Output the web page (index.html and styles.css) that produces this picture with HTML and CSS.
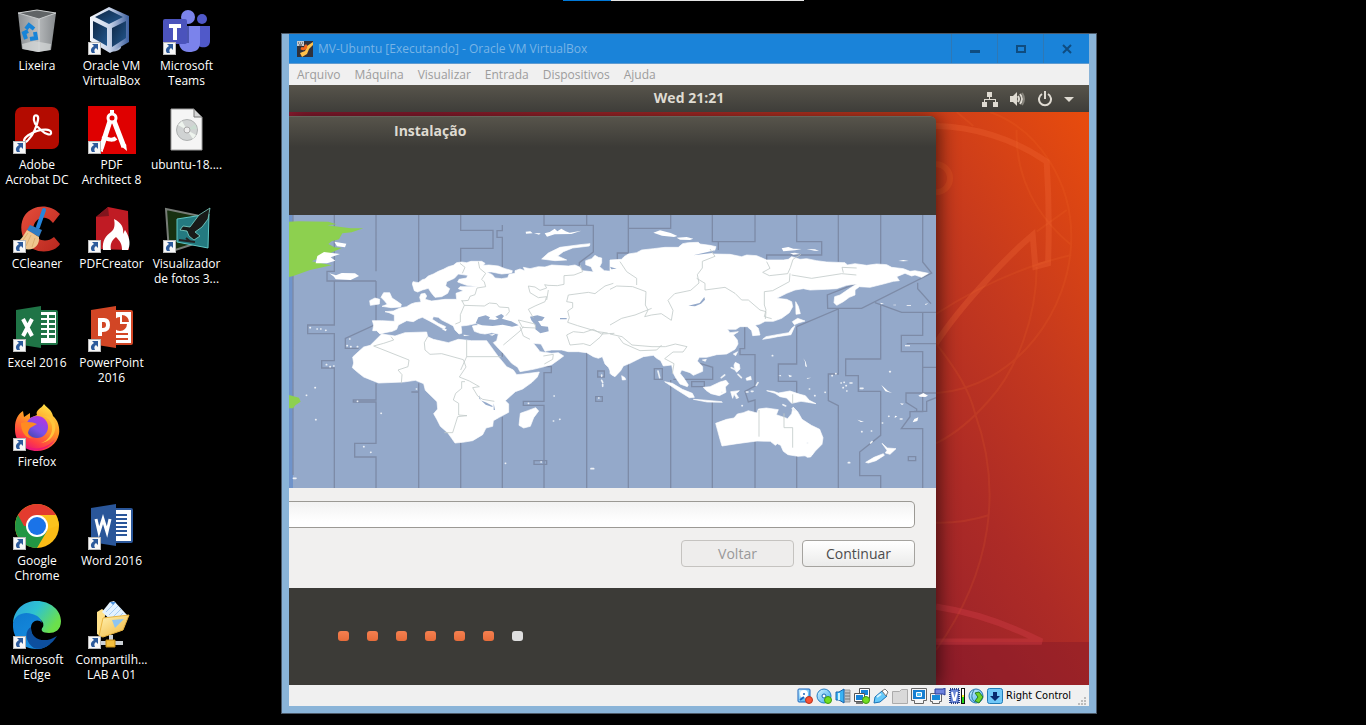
FILE: index.html
```html
<!DOCTYPE html>
<html lang="pt-BR">
<head>
<meta charset="utf-8">
<title>MV-Ubuntu [Executando] - Oracle VM VirtualBox</title>
<link rel="stylesheet" href="styles.css">
</head>
<body>
<svg class="defs" aria-hidden="true">
  <defs>
    <symbol id="shortcut" viewBox="0 0 13 13">
      <path d="M0 0h13v13H0z" fill="#b9b9b9"/><path d="M1 1h11v11H1z" fill="#f7f7f7"/>
      <path d="M4 2h6v6L8 6C6 7 6 9 7 11H4C2 8 3 6 6 4z" fill="#2c5a9b"/>
    </symbol>
    <linearGradient id="steel" x2="1"><stop stop-color="#8b8f92"/><stop offset=".5" stop-color="#b9bcbe"/><stop offset="1" stop-color="#85898c"/></linearGradient>
    <linearGradient id="vbFace" x2="1" y2="1"><stop stop-color="#0e2745"/><stop offset="1" stop-color="#23588f"/></linearGradient>
    <linearGradient id="vbEdge" x2="1"><stop stop-color="#f4f7fc"/><stop offset=".5" stop-color="#cbd6ea"/><stop offset="1" stop-color="#3c5f9e"/></linearGradient>
    <linearGradient id="foxBody" x1=".8" x2=".3" y2="1"><stop stop-color="#ffe94a"/><stop offset=".45" stop-color="#ff9526"/><stop offset=".8" stop-color="#ff3d45"/><stop offset="1" stop-color="#e5127b"/></linearGradient>
    <linearGradient id="foxGlobe" x1=".8" x2=".2" y2="1"><stop stop-color="#b833e1"/><stop offset=".6" stop-color="#7a50e8"/><stop offset="1" stop-color="#4247b0"/></linearGradient>
    <linearGradient id="edgeTop" x2="1" y2=".5"><stop stop-color="#2b9fe0"/><stop offset=".5" stop-color="#2fc3d0"/><stop offset="1" stop-color="#6be04b"/></linearGradient>
    <linearGradient id="edgeSide" x2=".6" y2="1"><stop stop-color="#0e7ad0"/><stop offset="1" stop-color="#1890e0"/></linearGradient>
    <linearGradient id="folder" x2=".8" y2="1"><stop stop-color="#fff3b5"/><stop offset="1" stop-color="#f2bb45"/></linearGradient>
    <linearGradient id="swoosh" x2="1" y2="1"><stop stop-color="#e54d3b"/><stop offset="1" stop-color="#b8271e"/></linearGradient>
    <linearGradient id="ice" x2="1" y2="1"><stop stop-color="#d6f3ff"/><stop offset="1" stop-color="#35a8ef"/></linearGradient>
  </defs>
</svg>
<main class="desktop">
  <div class="peek" aria-hidden="true"><span class="peek-active"></span><span class="peek-rest"></span></div>

  <nav class="icons" aria-label="Área de trabalho">
    <a class="icon" href="#"><svg viewBox="0 0 48 48">
      <path d="M5 6 24 3l19 3-5 37-13 2-16-3z" fill="url(#steel)"/><path d="M5 6 24 3l19 3-17 6z" fill="#606466" stroke="#c9cccd"/>
      <path d="M26 12v33" stroke="#d3d5d6"/><path d="m9 37 12-3 17 3-1 6-12 2-15-3z" fill="#d6d8d9" opacity=".7"/>
      <g fill="none" stroke="#1784d8" stroke-width="4"><path d="m13 22 3-4 5 4"/><path d="m22 25 1 6-6 1"/><path d="m13 32-2-6 4-2"/></g></svg><span>Lixeira</span></a>
    <a class="icon" href="#"><svg viewBox="0 0 48 48">
      <path d="M16 40c2-5 15-5 17 0 0 5-15 7-17 0z" fill="#a9b8d2"/>
      <path d="M21 0 41 9v26L22 46 2 34V10z" fill="url(#vbEdge)"/>
      <path d="m21 3 14 7-14 7-14-7z" fill="url(#vbFace)"/><path d="m5 14 14 7v18L5 31z" fill="url(#vbFace)"/><path d="m24 21 14-7v17l-14 9z" fill="url(#vbFace)"/>
      <use href="#shortcut" y="35" width="13" height="13"/></svg><span>Oracle VM<br>VirtualBox</span></a>
    <a class="icon" href="#"><svg viewBox="0 0 48 48">
      <circle cx="39" cy="12" r="5" fill="#5059c9"/><path d="M34 19h13v15c0 7-8 8-13 4z" fill="#5059c9"/>
      <circle cx="25" cy="10" r="7" fill="#7b83eb"/><path d="M16 19h21v17c0 7-5 9-11 9-8 0-10-6-10-10z" fill="#7b83eb"/>
      <path d="M15 19h11v17H15z" fill="#4b55b0"/><rect y="12" width="24" height="25" rx="2" fill="#4b53bc"/>
      <path d="M6 17h12v4h-4v12h-4V21H6z" fill="#fff"/><use href="#shortcut" y="35" width="13" height="13"/></svg><span>Microsoft<br>Teams</span></a>

    <a class="icon" href="#"><svg viewBox="0 0 48 48">
      <rect x="2" y="1" width="44" height="42" rx="7" fill="#b30b00"/>
      <path d="M11 35c0-4 7-8 13-10 6-2 13-2 14 1 1 4-5 3-10-2-5-4-8-9-7-13 1-3 5-2 4 3-1 6-5 15-9 19-2 3-5 4-5 2z" fill="none" stroke="#fff" stroke-width="2.2"/>
      <use href="#shortcut" y="35" width="13" height="13"/></svg><span>Adobe<br>Acrobat DC</span></a>
    <a class="icon" href="#"><svg viewBox="0 0 48 48">
      <path d="M0 0h48v48H0z" fill="#df0000"/><path d="M22 4h4v5h-4z" fill="#fff"/><circle cx="24" cy="12" r="4" fill="#df0000" stroke="#fff" stroke-width="3"/>
      <path d="M22 15 13 43M26 15l10 26" stroke="#fff" stroke-width="5"/><path d="m33 40 5-2 1 7zM15 41l-3 4 3 1z" fill="#fff"/><path d="M15 30c5 5 11 4 13 2" fill="none" stroke="#fff" stroke-width="4"/>
      <use href="#shortcut" y="35" width="13" height="13"/></svg><span>PDF<br>Architect 8</span></a>
    <a class="icon" href="#"><svg viewBox="0 0 48 48">
      <path d="M8 3h23l8 8v33H8z" fill="#f5f5f5" stroke="#9b9b9b"/><path d="M31 3v8h8z" fill="#d4d4d4" stroke="#777"/>
      <circle cx="24" cy="24" r="10.500" fill="#d0d3d3" stroke="#aeb1b1"/><path d="m24 24-9-5 4-4zm0 0 9 5-3 4z" fill="#eef4ee"/><path d="m24 24 8-6 2 5z" fill="#c9dbd0"/><circle cx="24" cy="24" r="3" fill="#eee" stroke="#aaa"/></svg><span>ubuntu-18....</span></a>

    <a class="icon" href="#"><svg viewBox="0 0 48 48">
      <path d="M47 9C36-2 20 0 12 10c-7 10-4 27 8 34 10 5 23 2 27-5l-6-7c-7 6-17 4-20-4-3-9 4-17 12-15 4 1 5 3 7 5z" fill="url(#swoosh)"/>
      <path d="M31 5 25 22" stroke="#2585dc" stroke-width="4" stroke-linecap="round"/><path d="m17 20 12 5-3 7-12-7z" fill="#2f7cc3"/>
      <path d="M14 25 26 32c1 8-5 14-14 12L2 38c6-2 8-7 12-13z" fill="#efc68f"/><path d="m15 28-7 10m10-8-5 11m9-8-3 9" fill="none" stroke="#dcae70"/>
      <use href="#shortcut" y="35" width="13" height="13"/></svg><span>CCleaner</span></a>
    <a class="icon" href="#"><svg viewBox="0 0 48 48">
      <path d="M8 12 20 2l20 4 1 39-33-1z" fill="#c01b24"/><path d="m8 12 12-10 1 9z" fill="#80151d"/>
      <path d="M15 45c-1-10 3-14 8-18 4-3 4-8 3-13 8 4 10 9 9 15l2-4c6 9 5 16 3 20h-6c0-6-2-9-6-13-5 4-6 8-5 13z" fill="#fff"/>
      <use href="#shortcut" y="35" width="13" height="13"/></svg><span>PDFCreator</span></a>
    <a class="icon" href="#"><svg viewBox="0 0 48 48">
      <path d="m3 4 34 7v26L6 47z" fill="#173010" stroke="#777c77" stroke-width="2"/><path d="m14 14 32-5-1 34-31-6z" fill="#247a80" stroke="#5fc7c5"/>
      <path d="M47 3 36 10l-9 12-7-1-3 4 7 1 2 5 5 4 6-4-5-4 7-5 6-8z" fill="#181a18" stroke="#8ceadb" stroke-width=".7"/><path d="m16 35 16 2m-9-4 5 4" stroke="#222" stroke-width="2"/>
      <use href="#shortcut" y="35" width="13" height="13"/></svg><span>Visualizador<br>de fotos 3...</span></a>

    <a class="icon" href="#"><svg viewBox="0 0 48 48">
      <rect x="25" y="7" width="19" height="33" rx="1" fill="#fff" stroke="#1f7446" stroke-width="2"/><path d="M28 11h6v3h-6zm8 0h6v3h-6zM28 16h6v3h-6zm8 0h6v3h-6zM28 21h6v3h-6zm8 0h6v3h-6zM28 26h6v3h-6zm8 0h6v3h-6zM28 31h6v3h-6zm8 0h6v3h-6z" fill="#1f7446"/>
      <path d="m3 6 25-4v42L3 40z" fill="#1f7446"/><path d="m10 15 9 17m0-17-9 17" stroke="#fff" stroke-width="4"/>
      <use href="#shortcut" y="35" width="13" height="13"/></svg><span>Excel 2016</span></a>
    <a class="icon" href="#"><svg viewBox="0 0 48 48">
      <rect x="25" y="7" width="19" height="33" rx="1" fill="#fff" stroke="#d24625" stroke-width="2"/><path d="M32 13v7h7a7 7 0 1 1-7-7z" fill="#d24625"/><path d="M34 11a7 7 0 0 1 7 7h-7zM28 29h12v2H28zm0 5h12v2H28z" fill="#d24625"/>
      <path d="m3 6 25-4v42L3 40z" fill="#d24625"/><path d="M12 32V16h4q4 0 4 5t-5 5h-3" fill="none" stroke="#fff" stroke-width="4"/>
      <use href="#shortcut" y="35" width="13" height="13"/></svg><span>PowerPoint<br>2016</span></a>

    <a class="icon solo" href="#"><svg viewBox="0 0 48 48">
      <path d="M31 1c3 4 8 6 9 12 5 4 7 12 6 18-2 10-11 17-22 17C11 48 1 38 2 24 2 17 5 11 10 8l1 6 6-4v5l7-3c-2-5 4-6 7-11z" fill="url(#foxBody)"/>
      <circle cx="24" cy="24" r="11" fill="url(#foxGlobe)"/><path d="M8 20c6-2 12-1 16 1l-7 4c-5 7 1 11 5 10-10 2-14-7-14-15z" fill="#ff8b21"/><path d="M28 13c5 0 10 4 11 10 1 8-4 15-11 17 14-2 18-17 11-25-3-3-5-1-11-2z" fill="#ffc43c"/>
      <path d="M7 39c10 9 26 9 35-3-5 11-26 17-35 3z" fill="#ed1778"/><use href="#shortcut" y="35" width="13" height="13"/></svg><span>Firefox</span></a>

    <a class="icon solo" href="#"><svg viewBox="0 0 48 48">
      <circle cx="24" cy="24" r="22" fill="#fbbc16"/><path d="M43 13H24L5 13a22 22 0 0 1 38 0z" fill="#e33b2e"/><path d="M5 13a22 22 0 0 0 19 33l10-17-10-5z" fill="#229644"/><path d="M5 13h20v11H11z" fill="#e33b2e"/>
      <path d="M24 13h19q2 5 3 10L33 28z" fill="#fbc21d"/><circle cx="24" cy="24" r="11" fill="#fff"/><circle cx="24" cy="24" r="9" fill="#1a73e8"/>
      <use href="#shortcut" y="35" width="13" height="13"/></svg><span>Google<br>Chrome</span></a>
    <a class="icon" href="#"><svg viewBox="0 0 48 48">
      <rect x="25" y="7" width="19" height="33" rx="1" fill="#fff" stroke="#2a5699" stroke-width="2"/><path d="M28 13h11M28 17h11M28 21h11M28 25h11M28 29h11M28 33h11" stroke="#2a5699" stroke-width="2"/>
      <path d="m3 6 25-4v42L3 40z" fill="#2a5699"/><path d="m8 17 3 13 4-13 4 13 3-13" fill="none" stroke="#fff" stroke-width="3"/>
      <use href="#shortcut" y="35" width="13" height="13"/></svg><span>Word 2016</span></a>

    <a class="icon solo" href="#"><svg viewBox="0 0 48 48">
      <path d="M0 22C1 8 11 0 24 0s24 9 24 20c0 9-6 12-12 12-7 0-9-3-6-6 2-5-3-10-12-10C9 14 3 17 0 22z" fill="url(#edgeTop)"/>
      <path d="M0 22c2-9 12-12 19-9 5 1 9 4 10 9-4-5-11-2-11 5 0 11 10 18 19 16-5 4-9 5-14 5C9 48-1 37 0 22z" fill="url(#edgeSide)"/><path d="M18 26c-1 11 12 18 26 9-6 10-16 15-23 12C12 41 11 30 18 26z" fill="#0d4f9e"/>
      <use href="#shortcut" y="35" width="13" height="13"/></svg><span>Microsoft<br>Edge</span></a>
    <a class="icon" href="#"><svg viewBox="0 0 48 48">
      <path d="m9 11 5-3 4 3-6 24-3-2z" fill="#ffe18a"/><path d="M26 0 39 14 29 25 14 11 22 1z" fill="#e3f2ff"/><path d="m18 11 8-8m-5 11 9-9m-6 12 9-9m-6 12 8-8" fill="none" stroke="#a5ccf3"/><path d="m22 1 6 0-3 3z" fill="#4d93e0"/><path d="m15 17 26-3-6 15-20 7-4-1z" fill="url(#folder)" stroke="#e9b541"/><path d="m24 19 12-1-9 9z" fill="#8ec5f2"/>
      <path d="M23 34v6M9 42h26" stroke="#cbd0d4" stroke-width="4"/><path d="M18 39h9v7h-9z" fill="#f4bf3c" stroke="#c28a13"/>
      <use href="#shortcut" y="35" width="13" height="13"/></svg><span>Compartilh...<br>LAB A 01</span></a>
  </nav>

  <section class="window">
    <header class="titlebar">
      <svg class="app" viewBox="0 0 16 16"><path d="M0 0h16v16H0z" fill="#30313b"/><path d="M3 12 8 10l2-5 6-4v3l-4 4-2 5-5 3z" fill="#ffc24a"/><path d="M4 7c4 2 6-1 4-3" stroke="#f1661c" stroke-width="3" fill="none"/><path d="M0 0h7v5H0z" fill="#c6c8cb"/><path d="M1 2h1m1 0h1m1 0h1M2 4h3" stroke="#444"/></svg>
      <h1>MV-Ubuntu [Executando] - Oracle VM VirtualBox</h1>
      <button aria-label="Minimizar"><svg viewBox="0 0 12 10"><path d="M1 6h10v3H1z" fill="#0f4c80"/></svg></button>
      <button aria-label="Maximizar"><svg viewBox="0 0 12 10"><path d="M2 2h8v6H2z" fill="none" stroke="#0f4c80" stroke-width="2"/></svg></button>
      <button aria-label="Fechar"><svg viewBox="0 0 12 10"><path d="m2 1 8 8m0-8L2 9" stroke="#0f4c80" stroke-width="2"/></svg></button>
    </header>
    <nav class="menu"><button>Arquivo</button><button>Máquina</button><button>Visualizar</button><button>Entrada</button><button>Dispositivos</button><button>Ajuda</button></nav>

    <div class="guest">
      <div class="panel">
        <span></span><time>Wed 21:21</time>
        <div class="tray">
          <svg width="16" height="16" viewBox="0 0 16 16" fill="#dfdbd2"><path d="M5 1h5v5H8v2h6v3h2v5h-5v-5h2V9H3v2h2v5H0v-5h2V8h5V6H5z"/></svg>
          <svg width="16" height="16" viewBox="0 0 16 16"><path d="M0 5h3l4-4v14l-4-4H0z" fill="#dfdbd2"/><path d="M8 5q2 3 0 6m2-8q4 5 0 10" fill="none" stroke="#dfdbd2" stroke-width="2"/><path d="M12 2q4 6 0 12" fill="none" stroke="#85827a" stroke-width="2"/></svg>
          <svg width="14" height="16" viewBox="1 0 14 16" fill="none" stroke="#dfdbd2" stroke-width="2"><path d="M5 3a6 6 0 1 0 6 0M8 0v8"/></svg>
          <svg width="10" height="16" viewBox="0 0 10 16"><path d="M0 6h10l-5 5z" fill="#dfdbd2"/></svg>
        </div>
      </div>
      <div class="wallpaper">
        <svg class="drawing" viewBox="0 6 477 1719" fill="none" aria-hidden="true">
          <path d="M0 1596h477v129H0z" fill="#7b1428" opacity=".35"/>
          <g stroke="#ff7a32" stroke-opacity=".12" stroke-width="6"><path d="m80 6 50 42M180 6C330 60 424 220 424 380c0 220-164 450-406 470M260 60C255 200 320 320 424 405M410 300l-90 65M424 435C270 470 130 540 18 612M320 470c0 150-60 310-142 400Q100 960 18 1000M18 700c62 80 100 140 117 210 80 220 55 470-117 710M178 1215q-78 25-160 23"/></g>
          <path d="M18 48c112 2 232 37 332 107q10 160 4 305l-38 10-8-95C230 440 90 590 18 700" stroke="#f46a38" stroke-opacity=".28" stroke-width="18"/>
          <circle cx="18" cy="205" r="42" stroke="#f46a28" stroke-opacity=".22" stroke-width="18"/><path d="M18 1490q162 25 317 105H18" stroke="#d23c47" stroke-opacity=".4" stroke-width="19"/>
        </svg>
        <section class="installer">
          <h2>Instalação</h2>
          <svg class="map" viewBox="12 15 1941 819" preserveAspectRatio="none" role="img" aria-label="Mapa de fusos horários">
            <path d="M12 15h1941v819H12z" fill="#94a9ca"/><path d="M12 15h12v819H12z" fill="#6f93ca"/>
            <g fill="none" stroke="#7d8ba7" stroke-width="4">
              <path d="M24 15v780M148 15v169h-22v29h147M148 213v132H68v26h80v81h-38v22h38v360M273 15v169M273 213v130l-92 42v30h40M273 520v50h-68v6h68v124h-64v41h64v93M401 15v200M401 520v26h-22M401 530v304M527 15v46h97v54h-97v50M527 690v144M652 45v17h-16v20h16v93M652 380v60M652 620v214M777 15v31h148v80l-42 32v10M777 470h22v18h-22v86h-62v12h62v248M905 15v30M905 425v409"/>
              <path d="M747 752h38v11h-38zM932 560h20v14h-20zM938 483h20v18h-20z"/>
              <g transform="translate(975 0)"><path d="M55 15v114H22v20M55 460v374M182 15v40H55M182 510v324M307 15v80h128V15M307 95h18v25M404 350v66h-14v18h45v94l-30 16 10 32 20-6v274M307 575v259M270 460l38 12v36H190M560 15v80h75v40H470v18M560 350l125-53v195h-30v80l30 15v247M560 350v112h-55v52h55v40M560 710v124M685 15v140M685 295h-32l-1-40 88-35M685 295h70l210-106-27-33V15M812 15v150M795 278l80 29h103M812 282v165H707v50h38v47h67v132l-63 50v71h63v37M923 218v18l40 45M938 307v69h-64v49h64v180H900v15l-26 36h64v178M978 401H890M978 472h-40M978 549h-90v28l32 20v10M978 563l-28 11v30h-38M895 740h22v12h-22zM133 476h24v32h-24zM245 515h38v15h-38z"/></g>
            </g>
            <g fill="#8dd04f"><path d="M12 35 40 34l90 1 25 8-28 3 70 9 38 0-35 12-28 3-10 18-22 6-10 8 18 10 22 2-45 20-45 20 60 12-65 14-50 18-28 6z"/><path d="m12 555 30 8 5 12-15 10-8 10H12z"/></g>
            <g fill="#fff" stroke="#fff" stroke-width="2" stroke-linejoin="round">
              <path d="m92 160 5-22 20-12 48 6-28 10 14 10-25 8zM148 95l36 6-4 11-24-3zM133 190l20 6 17-7 40 1 12 8-25 12-45-2-5-8z" stroke="none"/>
              <path d="M382 222 384 215 400 218 412 209 420 207 430 198 445 192 460 184 475 178 490 170 505 166 515 158 530 156 545 158 558 154 590 154 600 160 595 166 612 165 640 168 660 176 682 182 680 189 650 192 620 186 605 186 622 194 630 204 650 206 668 203 672 193 690 190 690 182 705 177 720 182 715 172 735 176 760 170 780 171 800 165 850 168 870 165 885 172 892 182 910 184 925 186 918 170 902 164 902 152 920 146 930 136 940 142 950 144 950 158 944 170 958 182 980 184 990 178V498L980 490 970 472 960 462 952 440 940 445 925 440 905 428 880 425 850 425 830 420 800 420 780 424 768 402 745 400 755 412 765 425 800 430 820 428 836 438 820 450 800 464 770 472 745 478 705 485 698 472 680 460 655 430 640 415 625 398 635 392 640 372 620 368 600 372 585 370 568 364 562 348 580 345 575 340 548 346 528 348 530 362 530 370 522 372 510 360 505 348 490 340 470 330 460 322 445 320 442 328 460 340 482 350 478 358 472 355 450 342 432 332 412 322 400 326 385 335 365 332 340 345 335 358 322 364 300 368 285 372 275 362 263 362 266 345 262 332 290 332 328 334 328 315 312 308 300 305 325 303 345 294 365 290 378 282 390 278 408 276 404 262 408 252 420 250 425 258 420 268 440 273 480 268 515 268 513 250 535 242 520 236 525 230 580 230 545 226 518 216 522 208 545 204 548 196 520 192 508 205 485 215 482 228 494 236 488 250 470 260 450 262 440 250 430 235 412 240 398 246 388 242z"/>
              <path d="m290 372 40 6 30-10 65-2 3 14 17 8 45 10 30-10 40 4h45l35 48 25 30 20 10 10 14 20-2 48-6-6 15-16 16-28 20-22 8-30 27 10 10v25l-28 15-18 10-2 17-20 5-10 20-30 18-30 5-23 2-10-14-12-17-22-19-10-20-10-18 12-14-2-22-35-34-5-20-25-10-35 5-75 3-25-10-20-8-18-14-16-14 4-14-3-18 13-12 20-18 20-5z"/>
              <path d="m752 593 9 10-15 20-10 26-20 5-14-8 4-36 22-8zM288 262l8-14h18l7 16 14 9 14 10-2 8-28 2-28-4 16-6-8-10zM254 272l16-8 14 4-1 14-27 4zM770 147l20-18 35-17 60-8 30-3-2 7-50 6-28 11-17 13 27 12-35 2z"/>
              <path d="m722 65 14-1 7 6-20 1zm25 4 20 1-5 4zm32 1 15-4 15-10 8 8 12-8 13 8 12 4 35-6-30 10-50 1-23 7zM470 358l15-1-2 7zM535 374l20 2-18 2zM612 374l20-3-10 6z" stroke="none"/>
              <g transform="translate(975 0)"><path d="M0 150 35 148 42 140 55 132 80 128 95 120 130 116 165 112 205 112 218 101 235 98 265 97 270 102 300 106 318 110 314 122 302 127 310 132 360 133 395 140 410 135 440 137 470 150 520 150 535 148 545 140 570 148 590 146 620 152 650 156 705 158 712 165 735 161 770 166 800 162 830 164 845 172 880 176 900 184 915 182 955 190 935 202 915 195 905 198 885 190 875 194 860 200 868 212 850 214 820 222 780 232 748 230 735 240 735 255 718 262 700 275 680 286 672 278 674 260 690 255 715 238 740 222 710 226 680 236 650 238 600 240 580 236 555 240 530 250 500 265 530 268 545 275 548 290 538 308 515 325 490 334 465 334 450 342 435 346 445 355 450 375 428 377 425 362 412 350 390 350 378 358 352 358 360 368 385 365 370 375 382 390 384 402 375 418 350 432 320 434 290 442 268 442 262 453 278 470 278 484 250 496 240 488 215 480 210 490 222 505 235 525 232 530 210 522 198 505 190 490 185 465 160 468 152 452 140 445 130 436 100 440 80 450 60 460 40 468 32 482 15 500 5 495 0 490z"/>
                <path d="m35 497 10 6 2 6-10 1zM164 515l23 5 30 18 30 12 6 12-15 1-40-25zM250 568l30 2 55 5 2 2-46-1zM280 532l20-2 30-14 18-5 8 10-10 10 2 16-20 10-25-6-15-10zM370 432l13-7-6 12zM372 465l4-8 12 6 2 14-10 10-6-8zM408 505l14-6 2 10-14 2zM362 545l26-3-10 9 8 12-6 2-8-12-4 12z"/>
                <path d="m470 542 20 2 15 5 35-6 30 10 16 4 12 14 20 10-25-4-20-3-28 6-15-16-20-4-15-10zM557 275l8 14 6 22-13 2zM547 335l16-10 22 8-20 6-12 5zM555 347l-12 27-40 6-20 4-25 4 10-8 33-6 35-6 10-14zM277 450l12-2-3 6z"/>
                <path d="m317 640 33-12 22-4 10-12 18-4 15-6 26 7 4-12 24-3 36 5-6 15 34 12 12-15 4-20 14 14 13 23 28 18 25 12 10 25-3 20-20 20-10 13-42 3-30-5-14-10-8-18-10-5-6 5-15-12-40-1-60 8-45 7-6-20zM580 733l13 3 15-4-6 9-10 1zM816 700l16 14 26 2-18 17-14-4 5-8zM767 757l25-15 28-11 3 5-25 16-23 7z"/>
                <path d="m130 68 20-7 32 8 20 9-10 3-36-4zM200 83l30-2 20 5-10 4-30-1zM515 115l20-4 15 5 25 1-20 4-35 3zM590 117l25 1 12 5-14-1zM865 153l15-3 16 3-16 1zM540 130l15-2 15 4-20 2z" stroke="none"/>
                <path d="m580 445 7 10 4 16-5-2-1-14zM814 525l20 18 12 6-20-5zM925 557l15-8 14 8-8 4-16-1zM913 627l12-5-3 11-14 4zM742 629l20 6-10 1zM505 498l7-3 2 4zM535 494l12 4-8 4zM590 504l14-1-12 3zM885 406h15v3h-15zM870 580l12 1-6 4zM855 617l7 2-8 5zM810 278l12 3-8 2zM850 284h8v2h-8zM890 285h13v2h-13zM945 282l10-2-8 5z" stroke="none"/></g>
            </g>
            <g fill="#94a9ca"><path d="m572 340 8-18 22-6 13 6-4 6 18 2 12-4-10-6 18-8 8 6-6 8 28 8 22 12-20 4-28-6-30 4-32-2zM735 320l22-4 22 6-8 10-12 1 10 15 20 2 2 14-25 6-15-12 0-12-12-15z"/><path d="m583 555 4 16 18 7 18 10-1 3-20-7-19-18zM626 580l4 20-4 0z"/><path d="m1210 287 34-8 14-18 2 8-12 12-18 8zM1225 136l65-15-8 8zM825 324h20v4h-20zM975 170l20 6-16 2z"/></g>
            <g fill="none" stroke="#c3cbca" stroke-width="2.500">
              <path d="m525 160 15 12-8 18M580 155l4 20 18 15-12 18 8 8 4 14-26 4-6 20-15 5-5 12-20 2M530 270l8 16 60 2 15-9 22 2 8 10 28 2 2 12-10 12M538 286l-12 28 0 22-15 6M700 330l50 12 2 12-40-2zM885 165l8 20-26 10-30 2v26l-20 4-28-1-10-2 6 10-20 7-15-10-20-3 5 20 25 15 25-3-5 15-30 13-20 10 15 25M790 240l-5 30M985 220l-25 8-20 15-10 8-20-4-60 8-5 20 18 3 0 15-15 10 5 20-5 14 30 10 60 18 30 4M845 375l20-10 30 3 30-10 25 14 38-2M845 375l10 30 40-4 20 6 30-25 10-14M318 380l8 10-30 10-30 8 106 42-3 20-30 10 12 14-2 26M428 380l-10 18 2 22 15 13 35-2 65 18 8 22-20 30 30 12 30 17-20 3 15 25 15 10 35 6M540 515l-10 0 0 20-18 15-7 20 16 10 0 35 25 2-28 3-5 16-10 32h-25M545 390v50h103M545 440l-18 40M705 350l10 28 20 10M655 405l50-42 10-13M775 438l30-5-2 15-25 14"/>
              <g transform="translate(975 0)"><path d="m0 238 20-10 48 2 40 15-2 40 8 15-10 20 20-5 30-4 30 20 5-30-15-30 20-20 48-10 25-22-5-25 15-20 0-20 38-15-15-22M260 205l25 15 0 20 60-8 30 18 20 20 20 0 35 30 18 5-2 22M30 155l20 30 30 20 0 20M0 345l35-20 40-10 50-20M0 372l36 8 30 25 60 5 40 0 30-8 35 8-12 16-30 0-25 20 28 15-5 30M25 380l15 20 50 22 50-2 15-15M470 155l10 20-22 12 20 10 55-6 8-18 8-25 24-15M540 190l-2 25-50 27-25 3 0 40 5 15-5 20 22 6M545 195l60 10 90-14 44 4M700 188l-4-16 44 2M447 600v80M522 610v43h26v60M548 553v28"/></g>
            </g>
            <path d="M75 353h1m20 4h1m10 0h1m14 4h1m71 26h1m-9 20h1m10 3h1m19 0h1m-94 54h1m10 6h1m10-2h1M90 533h1m-27 23h1m152 18h1m70 36h1M92 629h1m143 81h1m20 17h1m136-190h1m335 43h1m76-22h1m-3 75h1m18-5h1m-57 128h1m-108 4h1M950 495v4m0 12 3 6m0 6v6m-12 35h1M25 805h8m885-29h8m193-293 5 20m215-30 10 5m10 15 10 10m-50-8-10 8m110 15-5 8m-30 20h5m10-2h5m-50 20h1m-45-17h1m60 40h1m90-150h1m110 100h1m15 20h1m30-10h1m20-50h1m10-6h1m15 28h1m8-2h1m5 10h1m-10 6h1m20-14 6 0m-16 24h1m40-8h8m80-50h2m30 142h5m-40-8h1m-20 20h1m-34 24h1m-30 2h1m30 30-4 4m-190 0h1m-74-115 8 4m20 8 8 4m160 158h4" fill="none" stroke="#edf1f6" stroke-width="5" stroke-linecap="round"/>
          </svg>
          <form class="form" onsubmit="return false">
            <input type="text" aria-label="Localização">
            <div class="actions"><button disabled>Voltar</button><button>Continuar</button></div>
          </form>
          <div class="steps" aria-label="Etapa 7 de 7"><i></i><i></i><i></i><i></i><i></i><i></i><i class="last"></i></div>
        </section>
      </div>
    </div>

    <footer class="status">
      <svg viewBox="0 0 16 16"><rect x="1" y="1" width="12" height="13" rx="1" fill="url(#ice)" stroke="#1763bd"/><circle cx="7" cy="6" r="4" fill="#fff"/><circle cx="7" cy="6" r="1" fill="#1763bd"/><path d="m3 12 4-3" stroke="#1763bd" stroke-width="2"/><circle cx="12" cy="12" r="3.500" fill="#fa5135" stroke="#b9321c"/></svg>
      <svg viewBox="0 0 16 16"><circle cx="8" cy="8" r="7" fill="url(#ice)" stroke="#237fc4"/><circle cx="8" cy="8" r="2" fill="#fff" stroke="#1867b3"/><circle cx="12" cy="12" r="3.500" fill="#73df20" stroke="#3f9811"/></svg>
      <svg viewBox="0 0 16 16"><path d="M8 2h7v12H8z" fill="#c2c4c6" stroke="#999"/><path d="M10 5h5m-5 3h5m-5 3h5" stroke="#777"/><path d="M1 4h3l5-3v14l-5-3H1z" fill="#3ab2f3" stroke="#1764ad"/><path d="M4 5v7" stroke="#c9f2ff" stroke-width="2"/></svg>
      <svg viewBox="0 0 16 16"><path d="M5.500 .5h10v10h-10z" fill="#fff" stroke="#555"/><path d="M7 2h7v5H7z" fill="#1684d9"/><path d="M.5 5.500h10v8H.5z" fill="#fff" stroke="#555"/><path d="M2 7h7v5H2z" fill="#1684d9"/><path d="M2 14h7v2H2z" fill="#777"/><circle cx="12" cy="12" r="3.500" fill="#73df20" stroke="#3f9811"/></svg>
      <svg viewBox="0 0 16 16"><path d="m1 15 1-6 7-6 5 5-7 6z" fill="#65c9fa" stroke="#1770b4"/><path d="m9 3 3-2 3 3-2 4z" fill="#fff" stroke="#777"/><path d="m4 9 4-3" stroke="#d4f4ff" stroke-width="2"/></svg>
      <svg viewBox="0 0 16 16"><path d="M.5 3.500h7l2-2h6v14H.5z" fill="#d9d9d9" stroke="#ababab"/></svg>
      <svg viewBox="0 0 16 16"><path d="M.5 .5h15v12h-3v3h-9v-3h-3z" fill="#f5f5f5" stroke="#666"/><path d="M2 2h12v9H2z" fill="#167fd1"/><path d="M5.500 4.500h5v4h-5z" fill="#54bff3" stroke="#fff"/></svg>
      <svg viewBox="0 0 16 16"><path d="M.5 5.500h11v8h-2v2h-7v-2h-2z" fill="#f5f5f5" stroke="#666"/><path d="M2 7h8v5H2z" fill="#168ad9"/><path d="M5 1h8l2-1v7l-2-1H5z" fill="#6e83dd" stroke="#273a99"/></svg>
      <svg viewBox="0 0 16 16"><rect x="1" y="1" width="9" height="14" fill="#6a86d5" stroke="#26418d" stroke-width="2" stroke-dasharray="1 1"/><path d="m3 4 2 8h1l2-8" fill="none" stroke="#fff" stroke-width="2"/><path d="M12 0h4v16h-4z" fill="#111"/><path d="M13 1h2v6h-2z" fill="#fff"/><path d="M13 7h2v2h-2z" fill="#f4f420"/><path d="M13 9h2v6h-2z" fill="#20d81a"/></svg>
      <svg viewBox="0 0 16 16"><circle cx="8" cy="8" r="7" fill="url(#ice)" stroke="#2777ae"/><path d="M6 2c-3 5-3 9 1 12" fill="none" stroke="#25739c"/><path d="m7 5 4-1 4 5-4 6-4-2 3-4z" fill="#70d42c" stroke="#277d1e"/></svg>
      <svg viewBox="0 0 16 16"><rect x=".5" y=".5" width="15" height="15" rx="2" fill="#70c8f8" stroke="#217bb7"/><path d="M6 4h4v4h3l-5 5-5-5h3z" fill="#082a70"/></svg>
      <span>Right Control</span>
      <svg class="grip" viewBox="0 0 9 9" fill="#bcbcbc"><path d="M6 0h2v2H6zM3 3h2v2H3zM6 3h2v2H6zM0 6h2v2H0zM3 6h2v2H3zM6 6h2v2H6z"/></svg>
    </footer>
  </section>
</main>
</body>
</html>
```

FILE: styles.css
```css
* { box-sizing: border-box; }
body { margin: 0; background: #000; font-family: "Open Sans", "Noto Sans", sans-serif; font-size: 12px; }
button, input { font: inherit; }
svg { display: block; flex: none; }
.defs { position: absolute; width: 0; height: 0; }

.desktop { position: relative; height: 100vh; min-height: 640px; overflow: hidden; background: #000; }
.peek { position: absolute; top: 0; left: 0; right: 0; display: flex; justify-content: center; height: 1px; }
.peek-active { width: 48px; background: #0078d7; }
.peek-rest { width: 193px; background: #e4e4e4; }

.icons { display: grid; width: max-content; grid-template-columns: 74px 75px 75px; grid-auto-rows: 99px; }
.icon { display: flex; flex-direction: column; align-items: center; gap: 3px; padding-top: 7px; color: #fff; text-align: center; text-decoration: none; line-height: 15px; white-space: nowrap; }
.icon svg { width: 48px; height: 48px; }
.solo { grid-column: 1; }

.window { position: absolute; top: 33px; right: 269px; bottom: 11px; left: 281px; display: flex; flex-direction: column; padding: 0 7px 7px; border: 1px solid #4c5968; background: #8ab4d8; }
.titlebar { display: flex; align-items: center; height: 30px; padding-left: 8px; border-bottom: 1px solid #5f9bd0; background: #1a83d9; }
.app { width: 16px; height: 16px; }
.titlebar h1 { flex: 1; margin: 0 0 0 5px; color: #78b4e6; font-size: 12px; font-weight: 400; white-space: nowrap; }
.titlebar button { display: grid; place-items: center; align-self: stretch; width: 46px; padding: 0; border: 0; border-left: 1px solid #2f78b5; background: none; }
.titlebar button svg { width: 12px; height: 10px; }
.menu { display: flex; gap: 14px; height: 21px; padding-left: 8px; background: #f0f0f0; }
.menu button { padding: 0; border: 0; background: none; color: #9c9c9c; }

.guest { display: flex; flex: 1; flex-direction: column; min-height: 0; }
.panel { display: grid; grid-template-columns: 1fr auto 1fr; align-items: center; height: 27px; background: linear-gradient(#57544b, #3e3d39); color: #dfdbd2; font-size: 14px; font-weight: 700; line-height: 25px; }
.panel time { align-self: start; }
.tray { display: flex; justify-content: flex-end; gap: 12px; padding-right: 15px; }
.wallpaper { position: relative; flex: 1; display: flex; min-height: 0; padding-top: 4px; overflow: hidden; background: linear-gradient(55deg, #841a2f 0%, #8b1b2e 45%, #ad2b26 68%, #c5391e 82%, #e84c0d 100%); }
.drawing { position: absolute; top: 0; right: 0; width: 159px; height: 100%; }

.installer { position: relative; display: flex; flex: 1; flex-direction: column; margin-right: 153px; border-top-right-radius: 6px; background: #3c3b37; box-shadow: 2px 2px 20px rgba(0, 0, 0, .65); }
.installer h2 { height: 99px; margin: 0; padding: 0 0 0 105px; border-top: 1px solid #66645b; border-top-right-radius: 6px; background: linear-gradient(#57544b, #3c3b37 30px); color: #dfdbd2; font-size: 14px; line-height: 27px; }
.map { width: 100%; height: 273px; }
.form { padding: 13px 21px 21px 0; background: #f1f0ef; }
.form input { display: block; width: 100%; height: 27px; border: 1px solid #9b9994; border-left: 0; border-radius: 0 5px 5px 0; background: linear-gradient(#f2f2f2, #fff 20px); }
.actions { display: flex; justify-content: flex-end; gap: 8px; margin-top: 12px; }
.actions button { width: 113px; height: 27px; padding: 0; border: 1px solid #a5a39f; border-radius: 4px; background: linear-gradient(#fff, #ebebea); color: #4c4c4c; font-size: 14px; }
.actions button:disabled { border-color: #c5c3c0; background: #eeedec; color: #999; }
.steps { display: flex; flex: 1; align-items: center; gap: 18px; padding: 0 0 2px 49px; }
.steps i { width: 11px; height: 10px; border-radius: 3px; background: linear-gradient(#f58050, #e76c3a); }
.steps .last { background: #dedede; }

.status { display: flex; align-items: center; gap: 3px; height: 21px; padding-right: 2px; justify-content: flex-end; background: #f0f0f0; color: #000; font-family: "DejaVu Sans Condensed", "DejaVu Sans", sans-serif; font-size: 11px; }
.status svg { width: 16px; height: 16px; }
.status span { width: 69px; white-space: nowrap; }
.status .grip { align-self: flex-end; width: 9px; height: 9px; }
```
